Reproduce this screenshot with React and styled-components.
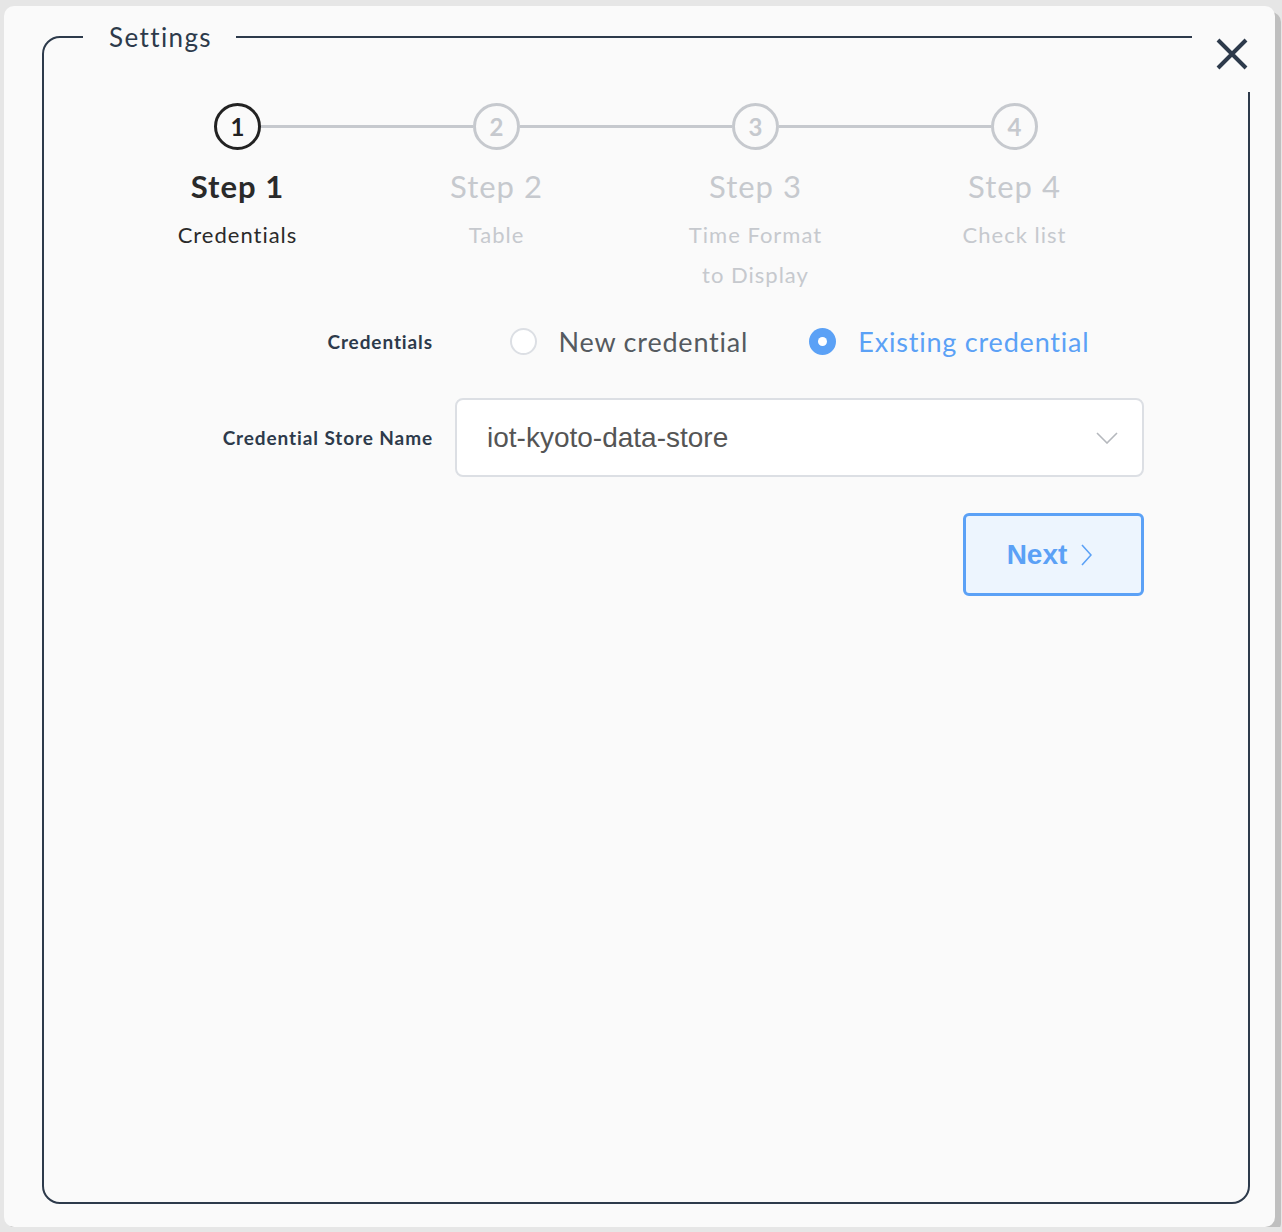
import React from 'react'
import styled, { createGlobalStyle } from 'styled-components'

const GlobalStyle = createGlobalStyle`
  html, body {
    margin: 0;
    padding: 0;
    background: #e6e6e6;
  }
  body {
    font-family: Lato, "Open Sans", sans-serif;
  }
`

const blue = '#5ba1f6'
const slate = '#2d3a4b'
const muted = '#c6c9ce'

const Card = styled.div`
  position: relative;
  box-sizing: border-box;
  display: flex;
  flex-direction: column;
  width: 1271px;
  height: 1221px;
  margin: 6px 0 0 4px;
  padding: 17px 25px 23px 38px;
  background: #fafafa;
  border-radius: 10px;
  box-shadow: 6px 6px 0 #bfbfbf;
`

const Frame = styled.fieldset`
  flex: 1;
  min-width: 0;
  margin: 0;
  padding: 0 104px 0 64px;
  border: 2px solid ${slate};
  border-radius: 18px;
`

const Legend = styled.legend`
  margin-left: -25px;
  padding: 0 24px 0 26px;
  font-size: 26px;
  line-height: 28px;
  letter-spacing: 1.4px;
  color: ${slate};
`

const CloseButton = styled.button`
  position: absolute;
  top: 10px;
  right: 3px;
  width: 80px;
  height: 76px;
  display: flex;
  align-items: center;
  justify-content: center;
  padding: 0;
  border: none;
  background: #fafafa;
  cursor: pointer;
`

const Stepper = styled.div`
  display: grid;
  grid-template-columns: repeat(4, 259px);
  margin-top: 52px;
`

const Step = styled.div`
  display: flex;
  flex-direction: column;
  align-items: center;
`

const CircleRow = styled.div`
  display: flex;
  align-items: center;
  align-self: stretch;
`

const Connector = styled.div`
  flex: 1;
  height: 3px;
  background: ${p => (p.$hidden ? 'transparent' : muted)};
`

const Circle = styled.div`
  box-sizing: border-box;
  width: 47px;
  height: 47px;
  border-radius: 50%;
  border: 3px solid ${p => (p.$active ? '#222' : muted)};
  display: flex;
  align-items: center;
  justify-content: center;
  font-size: 24px;
  font-weight: 700;
  color: ${p => (p.$active ? '#222' : muted)};
`

const StepTitle = styled.div`
  margin-top: 16px;
  font-size: 31px;
  line-height: 40px;
  letter-spacing: 1px;
  font-weight: ${p => (p.$active ? 700 : 400)};
  color: ${p => (p.$active ? '#2a2a2a' : muted)};
`

const StepDesc = styled.div`
  margin-top: 9px;
  font-size: 22px;
  line-height: 40px;
  letter-spacing: 1px;
  text-align: center;
  color: ${p => (p.$active ? '#2a2a2a' : muted)};
`

const Form = styled.div`
  display: flex;
  flex-direction: column;
  margin-top: 26px;
  width: 1036px;
`

const Row = styled.div`
  display: grid;
  grid-template-columns: 325px 1fr;
  column-gap: 22px;
  align-items: center;
  margin-top: ${p => p.$gap || 0}px;
`

const Label = styled.div`
  text-align: right;
  font-size: 19px;
  letter-spacing: 0.9px;
  font-weight: 700;
  color: ${slate};
`

const RadioGroup = styled.div`
  display: flex;
  justify-content: center;
  gap: 61px;
  height: 40px;
`

const RadioOption = styled.label`
  display: flex;
  align-items: center;
  gap: 22px;
  font-size: 27px;
  letter-spacing: 0.8px;
  color: ${p => (p.$checked ? blue : '#555a60')};
`

const RadioDot = styled.span`
  box-sizing: border-box;
  width: 27px;
  height: 27px;
  border-radius: 50%;
  background: ${p => (p.$checked ? blue : '#fff')};
  border: ${p => (p.$checked ? 'none' : '2px solid #dcdfe4')};
  display: flex;
  align-items: center;
  justify-content: center;

  &::after {
    content: '';
    display: ${p => (p.$checked ? 'block' : 'none')};
    width: 9px;
    height: 9px;
    border-radius: 50%;
    background: #fff;
  }
`

const Select = styled.div`
  box-sizing: border-box;
  height: 79px;
  display: flex;
  align-items: center;
  justify-content: space-between;
  padding: 0 24px 0 30px;
  background: #fff;
  border: 2px solid #dcdfe4;
  border-radius: 8px;
  font-family: "Liberation Sans", Arial, sans-serif;
  font-size: 28px;
  color: #555;
`

const Actions = styled.div`
  display: flex;
  justify-content: flex-end;
  margin-top: 36px;
`

const NextButton = styled.button`
  box-sizing: border-box;
  width: 181px;
  height: 83px;
  display: flex;
  align-items: center;
  justify-content: center;
  gap: 14px;
  padding: 0 8px 0 0;
  background: #edf5fe;
  border: 3px solid ${blue};
  border-radius: 6px;
  font-family: "Liberation Sans", Arial, sans-serif;
  font-size: 28px;
  font-weight: 700;
  color: ${blue};
  cursor: pointer;
`

const steps = [
  { title: 'Step 1', desc: ['Credentials'] },
  { title: 'Step 2', desc: ['Table'] },
  { title: 'Step 3', desc: ['Time Format', 'to Display'] },
  { title: 'Step 4', desc: ['Check list'] },
]

export default function App() {
  return (
    <>
      <GlobalStyle />
      <Card>
        <Frame>
          <Legend>Settings</Legend>
          <Stepper>
            {steps.map((s, i) => {
              const active = i === 0
              return (
                <Step key={s.title}>
                  <CircleRow>
                    <Connector $hidden={i === 0} />
                    <Circle $active={active}>{i + 1}</Circle>
                    <Connector $hidden={i === steps.length - 1} />
                  </CircleRow>
                  <StepTitle $active={active}>{s.title}</StepTitle>
                  <StepDesc $active={active}>
                    {s.desc.map(d => <div key={d}>{d}</div>)}
                  </StepDesc>
                </Step>
              )
            })}
          </Stepper>
          <Form>
            <Row>
              <Label>Credentials</Label>
              <RadioGroup>
                <RadioOption>
                  <RadioDot />
                  New credential
                </RadioOption>
                <RadioOption $checked>
                  <RadioDot $checked />
                  Existing credential
                </RadioOption>
              </RadioGroup>
            </Row>
            <Row $gap={37}>
              <Label>Credential Store Name</Label>
              <Select>
                <span>iot-kyoto-data-store</span>
                <svg width="22" height="12" viewBox="0 0 22 12" fill="none">
                  <path d="M1 1l10 10L21 1" stroke="#b5b8bd" strokeWidth="1.6" />
                </svg>
              </Select>
            </Row>
            <Actions>
              <NextButton>
                Next
                <svg width="11" height="22" viewBox="0 0 11 22" fill="none">
                  <path d="M1 1l9 10-9 10" stroke={blue} strokeWidth="1.6" />
                </svg>
              </NextButton>
            </Actions>
          </Form>
        </Frame>
        <CloseButton aria-label="Close">
          <svg width="32" height="32" viewBox="0 0 32 32">
            <path d="M2 2l28 28M30 2L2 30" stroke={slate} strokeWidth="4" />
          </svg>
        </CloseButton>
      </Card>
    </>
  )
}
